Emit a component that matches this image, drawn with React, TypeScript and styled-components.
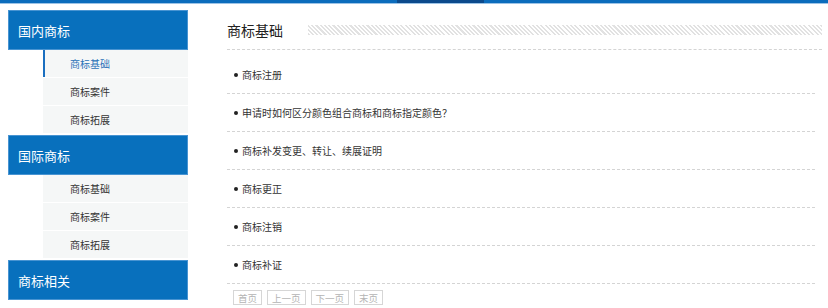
import React from "react";
import styled, { createGlobalStyle } from "styled-components";

const GlobalStyle = createGlobalStyle`
  html, body {
    margin: 0;
    padding: 0;
    background: #fff;
  }
  body {
    font-family: "Noto Sans CJK SC", "Liberation Sans", sans-serif;
    color: #333;
  }
  ul {
    margin: 0;
    padding: 0;
    list-style: none;
  }
`;

type TNavGroup = {
  title: string;
  items: string[];
};

const navGroups: TNavGroup[] = [
  { title: "国内商标", items: ["商标基础", "商标案件", "商标拓展"] },
  { title: "国际商标", items: ["商标基础", "商标案件", "商标拓展"] },
  { title: "商标相关", items: [] },
];

const articles = [
  "商标注册",
  "申请时如何区分颜色组合商标和商标指定颜色？",
  "商标补发变更、转让、续展证明",
  "商标更正",
  "商标注销",
  "商标补证",
];

const pages = ["首页", "上一页", "下一页", "末页"];

export default function App() {
  return (
    <>
      <GlobalStyle />
      <TopBar>
        <TopBarSpacer />
        <TopBarActive />
      </TopBar>
      <Main>
        <Sidebar>
          {navGroups.map((group, gi) => (
            <NavGroup key={group.title}>
              <NavHeader>{group.title}</NavHeader>
              {group.items.length > 0 && (
                <NavList>
                  {group.items.map((item, ii) => (
                    <NavItem key={item} active={gi === 0 && ii === 0}>
                      {item}
                    </NavItem>
                  ))}
                </NavList>
              )}
            </NavGroup>
          ))}
        </Sidebar>
        <Content>
          <TitleRow>
            <Title>商标基础</Title>
            <Hatch />
          </TitleRow>
          <ArticleList>
            {articles.map((a) => (
              <ArticleRow key={a}>{a}</ArticleRow>
            ))}
          </ArticleList>
          <Pager>
            {pages.map((p) => (
              <PageButton key={p}>{p}</PageButton>
            ))}
          </Pager>
        </Content>
      </Main>
    </>
  );
}

const TopBar = styled.div`
  display: flex;
  height: 3px;
  background: #0b6cbc;
  border-bottom: 1px solid #9cc3e6;
`;

const TopBarSpacer = styled.div`
  width: 397px;
`;

const TopBarActive = styled.div`
  width: 87px;
  background: #0b4a8c;
`;

const Main = styled.div`
  display: flex;
  align-items: flex-start;
  padding-top: 6px;
`;

const Sidebar = styled.div`
  width: 180px;
  margin-left: 8px;
  display: flex;
  flex-direction: column;
`;

const NavGroup = styled.div`
  margin-bottom: 1px;
`;

const NavHeader = styled.h3`
  margin: 0;
  box-sizing: border-box;
  height: 40px;
  padding-left: 9px;
  display: flex;
  align-items: center;
  background: #0870bd;
  border: 1px solid #4894d2;
  color: #fff;
  font-size: 13px;
  font-weight: normal;
`;

const NavList = styled.ul`
  margin-left: 35px;
`;

const NavItem = styled.li<{ active?: boolean }>`
  box-sizing: border-box;
  height: 27px;
  margin-bottom: 1px;
  padding-left: 25px;
  display: flex;
  align-items: center;
  background: #f5f7f7;
  border-left: 2px solid ${(p) => (p.active ? "#1a6fc0" : "transparent")};
  color: ${(p) => (p.active ? "#2a72b8" : "#333")};
  font-size: 10px;
`;

const Content = styled.div`
  width: 595px;
  margin-left: 39px;
`;

const TitleRow = styled.div`
  box-sizing: border-box;
  height: 40px;
  display: flex;
  align-items: center;
  border-bottom: 1px dashed #d4d4d4;
`;

const Title = styled.h2`
  margin: 0 25px 0 0;
  font-size: 14px;
  font-weight: normal;
  color: #222;
`;

const Hatch = styled.div`
  flex: 1;
  height: 10px;
  background: repeating-linear-gradient(
    45deg,
    #e2e2e2 0 1.5px,
    #fff 1.5px 3px
  );
`;

const ArticleList = styled.ul`
  margin-right: 7px;
  padding-top: 6px;
`;

const ArticleRow = styled.li`
  box-sizing: border-box;
  height: 38px;
  padding-left: 7px;
  display: flex;
  align-items: center;
  border-bottom: 1px dashed #d4d4d4;
  font-size: 10px;
  color: #333;

  &::before {
    content: "";
    width: 4px;
    height: 4px;
    margin-right: 4px;
    border-radius: 50%;
    background: #222;
  }
`;

const Pager = styled.div`
  display: flex;
  gap: 5px;
  padding: 6px 0 0 6px;
`;

const PageButton = styled.span`
  box-sizing: border-box;
  height: 15px;
  padding: 0 4px;
  display: flex;
  align-items: center;
  border: 1px solid #d6d6d6;
  color: #b4b4b4;
  font-size: 9.5px;
`;
